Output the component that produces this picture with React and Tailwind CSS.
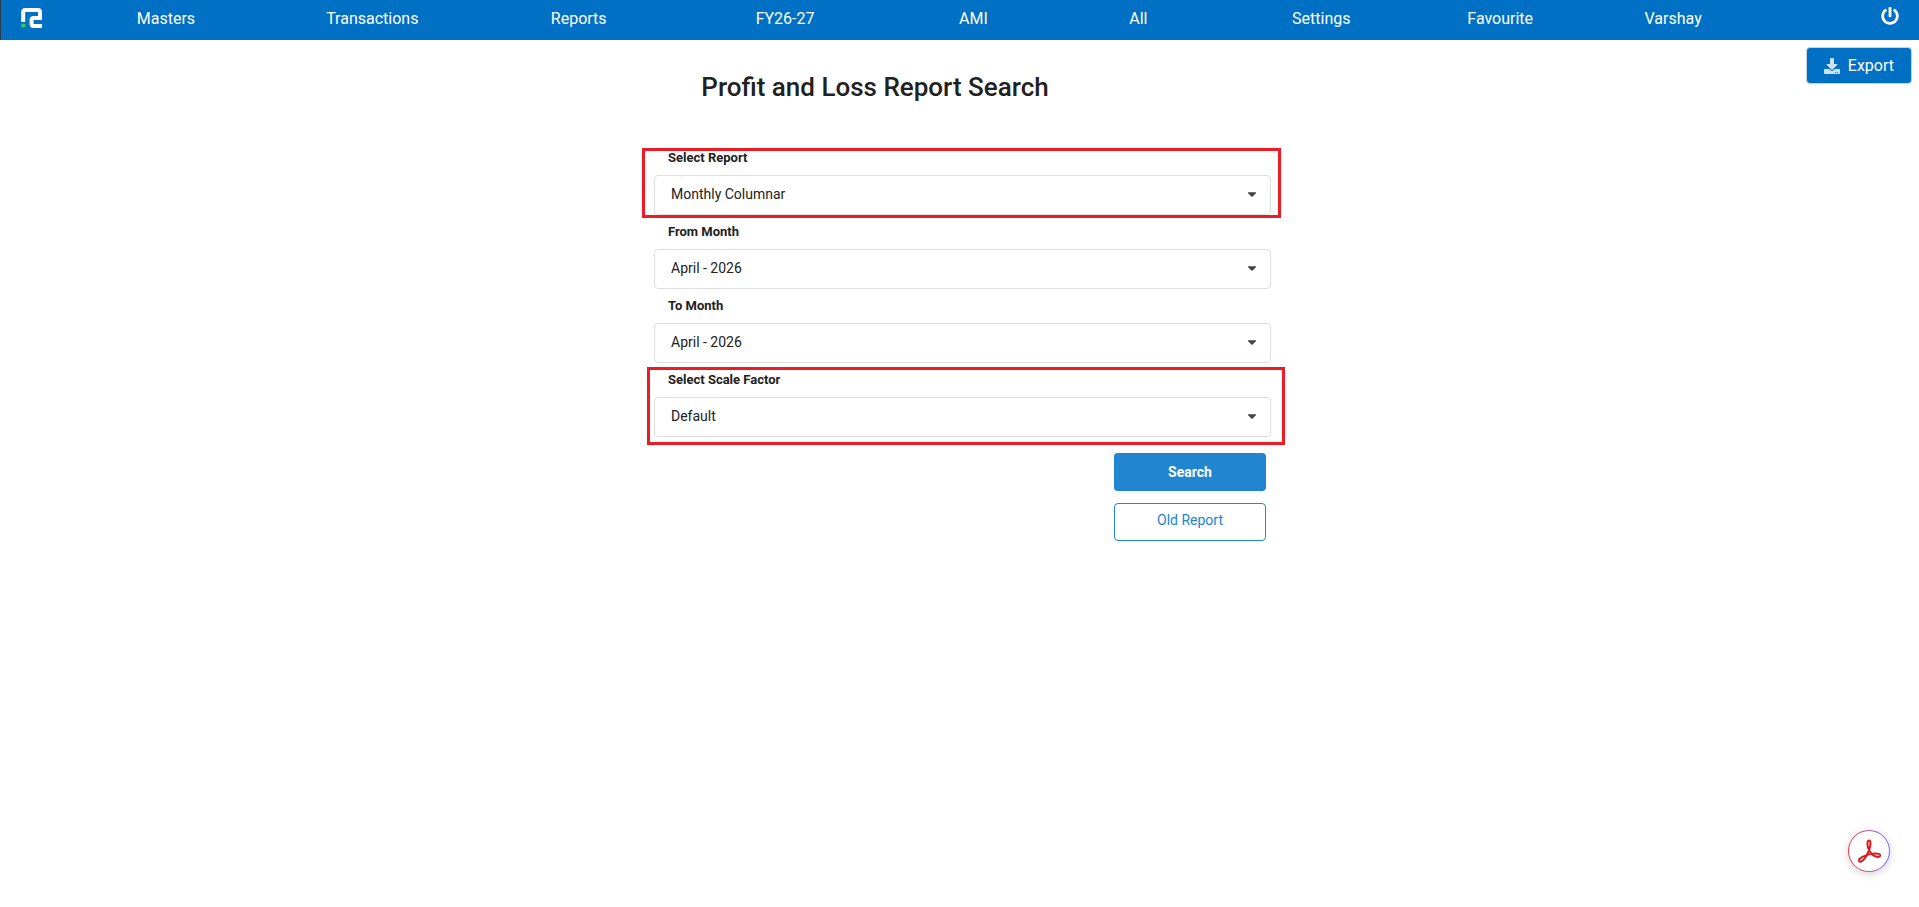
import React, { useState } from "react";
import { FaCaretDown, FaDownload, FaPowerOff } from "react-icons/fa";

const menuItems = [
  "Masters",
  "Transactions",
  "Reports",
  "FY26-27",
  "AMI",
  "All",
  "Settings",
  "Favourite",
  "Varshay",
];

const months = ["April - 2026", "May - 2026", "June - 2026"];

function Logo() {
  return (
    <svg width="22" height="20" viewBox="0 0 22 20" fill="none">
      <path
        d="M2.2 14V4.2Q2.2 2 4.4 2H16.8Q19 2 19 4.200V9.900H12.600Q10.600 9.900 10.600 11.900V16Q10.600 18 12.600 18H21"
        stroke="#fff"
        strokeWidth="4"
      />
      <circle cx="2.4" cy="17.6" r="2.2" fill="#2fd04b" />
    </svg>
  );
}

function Navbar() {
  return (
    <nav className="grid h-10 grid-cols-[62fr_206fr_207fr_206fr_207fr_170fr_160fr_206fr_152fr_194fr_149fr] items-center border-l border-[#2b3a4a] bg-[#0070c4] text-base text-white">
      <a href="#home" aria-label="Home" className="pb-1 pl-5">
        <Logo />
      </a>
      {menuItems.map((item) => (
        <a key={item} href="#menu" className="pb-0.5 text-center leading-5">
          {item}
        </a>
      ))}
      <button aria-label="Log out" className="justify-self-end pr-5 pb-2">
        <FaPowerOff size={18} />
      </button>
    </nav>
  );
}

function SelectField({ id, label, options, children }) {
  const [value, setValue] = useState(options[0]);

  return (
    <div className="relative">
      <label
        htmlFor={id}
        className="block pl-3.5 text-[13px] leading-[34px] font-bold"
      >
        {label}
      </label>
      <div className="relative">
        <select
          id={id}
          value={value}
          onChange={(e) => setValue(e.target.value)}
          className="block h-10 w-full appearance-none rounded border border-[#dededf] bg-white px-4 pb-0.5 text-sm outline-none"
        >
          {options.map((option) => (
            <option key={option}>{option}</option>
          ))}
        </select>
        <FaCaretDown
          size={14}
          className="pointer-events-none absolute top-3 right-3 text-[#444]"
        />
      </div>
      {children}
    </div>
  );
}

function AcrobatButton() {
  return (
    <button
      aria-label="Open in Acrobat"
      className="fixed right-[29px] bottom-[35px] rounded-full bg-linear-to-r from-[#e8323c] to-[#7a5cff] p-px shadow-[0_2px_8px_rgba(0,0,0,0.18)]"
    >
      <span className="flex size-10 items-center justify-center rounded-full bg-white">
        <svg width="24" height="24" viewBox="0 0 24 24" fill="none">
          <path
            d="M11.600 10.200C10.200 7 9.800 2 12 1.600C14.200 1.600 13.700 6.600 12.400 10.200C10.800 14.500 7.800 21.200 4.200 22.600C2.200 23.200 1.200 21.400 2.700 19.800C5 17.300 12 14.900 17.500 14.500C21 14.300 23.500 15 23.100 16.700C22.500 18.700 18.500 18 15.800 15.900C13.800 14.400 12.300 12.100 11.600 10.200Z"
            stroke="#d7191c"
            strokeWidth="2"
            strokeLinejoin="round"
          />
        </svg>
      </span>
    </button>
  );
}

function App() {
  return (
    <div className="min-h-screen bg-white font-[Roboto,sans-serif] text-[#212121]">
      <Navbar />

      <header className="grid grid-cols-[1fr_auto_1fr] items-start pt-[7px] pr-[7px]">
        <span />
        <h1 className="pt-5 pr-[162px] text-[26px] leading-10 font-medium">
          Profit and Loss Report Search
        </h1>
        <button className="flex h-[37px] items-center gap-2 justify-self-end rounded border border-[#c3d3e2] bg-[#0070c4] px-[17px] text-base text-white">
          <FaDownload size={16} className="opacity-80" />
          Export
        </button>
      </header>

      <form
        className="mx-auto w-full max-w-[617px] translate-x-[3px] pt-[34px]"
        onSubmit={(e) => e.preventDefault()}
      >
        <SelectField
          id="report"
          label="Select Report"
          options={["Monthly Columnar", "Monthly", "Yearly"]}
        >
          <div className="pointer-events-none absolute top-[7px] -right-2.5 -bottom-[3px] -left-3 border-3 border-[#ed1c24]" />
        </SelectField>
        <SelectField id="from-month" label="From Month" options={months} />
        <SelectField id="to-month" label="To Month" options={months} />
        <SelectField
          id="scale"
          label="Select Scale Factor"
          options={["Default", "Thousands", "Lakhs"]}
        >
          <div className="pointer-events-none absolute top-1 -right-3.5 -bottom-2 -left-[7px] border-3 border-[#ed1c24]" />
        </SelectField>

        <div className="flex flex-col items-end gap-3 pt-4 pr-[5px]">
          <button
            type="submit"
            className="h-[38px] w-[152px] rounded bg-[#2185d0] text-sm font-bold text-white"
          >
            Search
          </button>
          <button
            type="button"
            className="h-[38px] w-[152px] rounded border border-[#2185d0] pb-1 text-sm text-[#2185d0]"
          >
            Old Report
          </button>
        </div>
      </form>

      <AcrobatButton />
    </div>
  );
}

export default App;
